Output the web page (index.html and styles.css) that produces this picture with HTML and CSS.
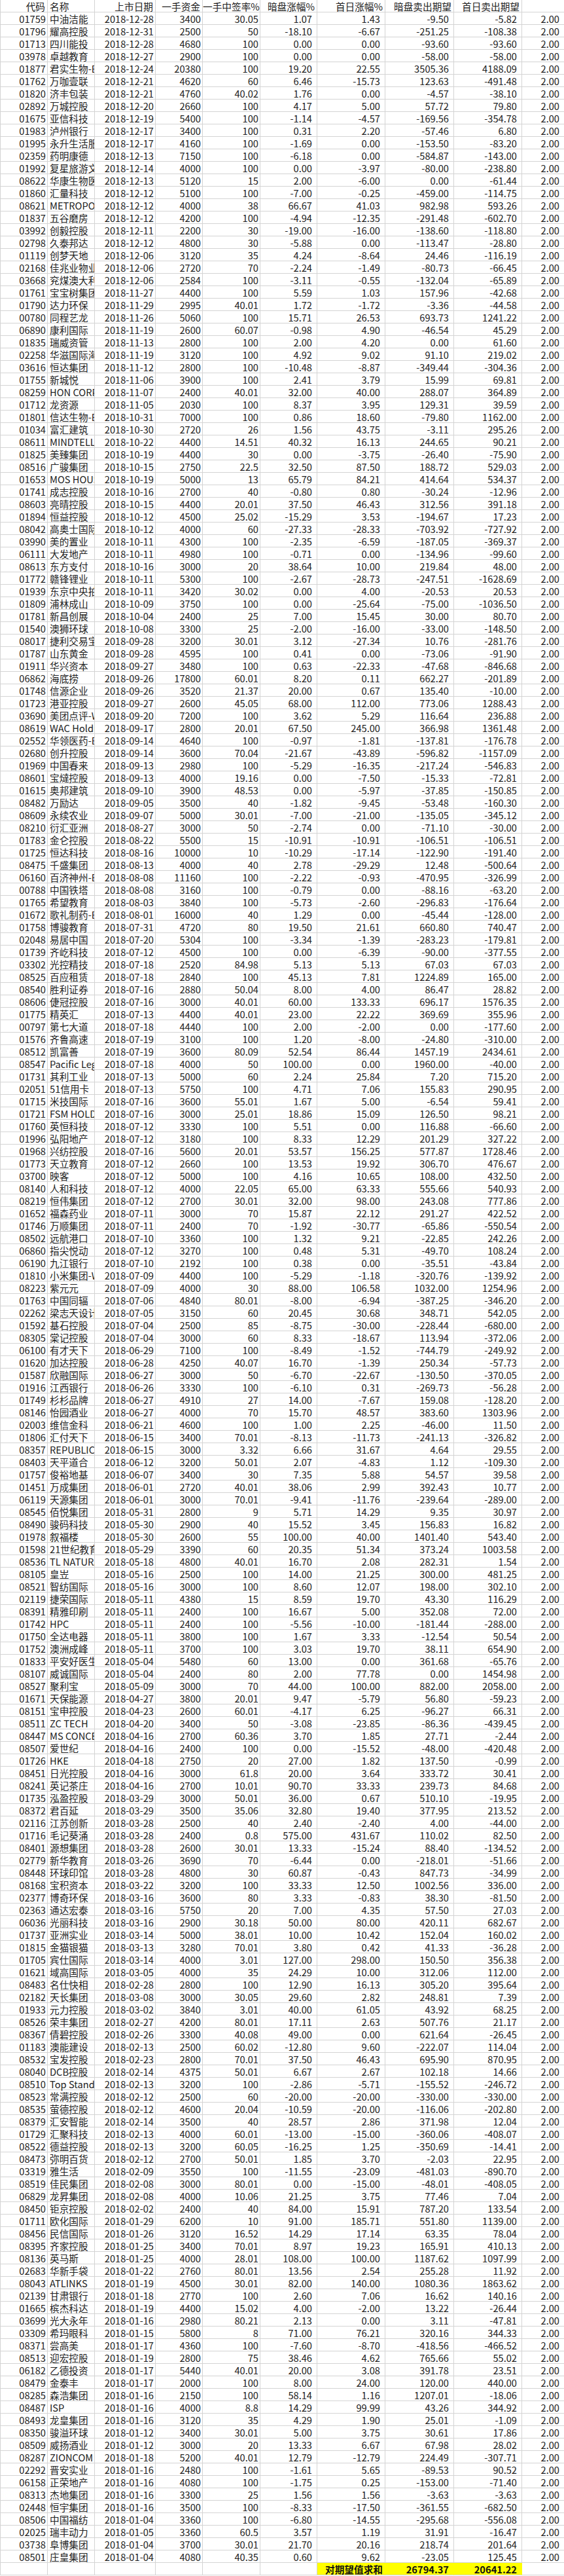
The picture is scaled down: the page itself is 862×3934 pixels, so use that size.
FILE: index.html
```html
<!DOCTYPE html>
<html lang="zh-CN">
<head>
<meta charset="utf-8">
<title>港股新股打新期望</title>
<link rel="stylesheet" href="styles.css">
</head>
<body>
<table class="sheet">
<thead>
<tr class="head"><th>代码<th class="name">名称<th>上市日期<th>一手资金<th>一手中签率%<th>暗盘涨幅%<th>首日涨幅%<th>暗盘卖出期望<th>首日卖出期望<th></tr>
</thead>
<tbody>
<tr><td>01759<td>中油洁能<td>2018-12-28<td>3400<td>30.05<td>1.07<td>1.43<td>-9.50<td>-5.82<td>2.00
<tr><td>01796<td>耀高控股<td>2018-12-31<td>2500<td>50<td>-18.10<td>-6.67<td>-251.25<td>-108.38<td>2.00
<tr><td>01713<td>四川能投<td>2018-12-28<td>4680<td>100<td>0.00<td>0.00<td>-93.60<td>-93.60<td>2.00
<tr><td>03978<td>卓越教育<td>2018-12-27<td>2900<td>100<td>0.00<td>0.00<td>-58.00<td>-58.00<td>2.00
<tr><td>01877<td>君实生物-B<td>2018-12-24<td>20380<td>100<td>19.20<td>22.55<td>3505.36<td>4188.09<td>2.00
<tr><td>01762<td>万咖壹联<td>2018-12-21<td>4620<td>60<td>6.46<td>-15.73<td>123.63<td>-491.48<td>2.00
<tr><td>01820<td>济丰包装<td>2018-12-21<td>4760<td>40.02<td>1.76<td>0.00<td>-4.57<td>-38.10<td>2.00
<tr><td>02892<td>万城控股<td>2018-12-20<td>2660<td>100<td>4.17<td>5.00<td>57.72<td>79.80<td>2.00
<tr><td>01675<td>亚信科技<td>2018-12-19<td>5400<td>100<td>-1.14<td>-4.57<td>-169.56<td>-354.78<td>2.00
<tr><td>01983<td>泸州银行<td>2018-12-17<td>3400<td>100<td>0.31<td>2.20<td>-57.46<td>6.80<td>2.00
<tr><td>01995<td>永升生活服务<td>2018-12-17<td>4160<td>100<td>-1.69<td>0.00<td>-153.50<td>-83.20<td>2.00
<tr><td>02359<td>药明康德<td>2018-12-13<td>7150<td>100<td>-6.18<td>0.00<td>-584.87<td>-143.00<td>2.00
<tr><td>01992<td>复星旅游文化<td>2018-12-14<td>4000<td>100<td>0.00<td>-3.97<td>-80.00<td>-238.80<td>2.00
<tr><td>08622<td>华康生物医学<td>2018-12-13<td>5120<td>15<td>2.00<td>-6.00<td>0.00<td>-61.44<td>2.00
<tr><td>01860<td>汇量科技<td>2018-12-12<td>5100<td>100<td>-7.00<td>-0.25<td>-459.00<td>-114.75<td>2.00
<tr><td>08621<td>METROPOLIS<td>2018-12-12<td>4000<td>38<td>66.67<td>41.03<td>982.98<td>593.26<td>2.00
<tr><td>01837<td>五谷磨房<td>2018-12-12<td>4200<td>100<td>-4.94<td>-12.35<td>-291.48<td>-602.70<td>2.00
<tr><td>03992<td>创毅控股<td>2018-12-11<td>2200<td>30<td>-19.00<td>-16.00<td>-138.60<td>-118.80<td>2.00
<tr><td>02798<td>久泰邦达<td>2018-12-12<td>4800<td>30<td>-5.88<td>0.00<td>-113.47<td>-28.80<td>2.00
<tr><td>01119<td>创梦天地<td>2018-12-06<td>3120<td>35<td>4.24<td>-8.64<td>24.46<td>-116.19<td>2.00
<tr><td>02168<td>佳兆业物业<td>2018-12-06<td>2720<td>70<td>-2.24<td>-1.49<td>-80.73<td>-66.45<td>2.00
<tr><td>03668<td>兖煤澳大利亚<td>2018-12-06<td>2584<td>100<td>-3.11<td>-0.55<td>-132.04<td>-65.89<td>2.00
<tr><td>01761<td>宝宝树集团<td>2018-11-27<td>4400<td>100<td>5.59<td>1.03<td>157.96<td>-42.68<td>2.00
<tr><td>01790<td>达力环保<td>2018-11-29<td>2995<td>40.01<td>1.72<td>-1.72<td>-3.36<td>-44.58<td>2.00
<tr><td>00780<td>同程艺龙<td>2018-11-26<td>5060<td>100<td>15.71<td>26.53<td>693.73<td>1241.22<td>2.00
<tr><td>06890<td>康利国际<td>2018-11-19<td>2600<td>60.07<td>-0.98<td>4.90<td>-46.54<td>45.29<td>2.00
<tr><td>01835<td>瑞威资管<td>2018-11-13<td>2800<td>100<td>2.00<td>4.20<td>0.00<td>61.60<td>2.00
<tr><td>02258<td>华滋国际海洋<td>2018-11-19<td>3120<td>100<td>4.92<td>9.02<td>91.10<td>219.02<td>2.00
<tr><td>03616<td>恒达集团<td>2018-11-12<td>2800<td>100<td>-10.48<td>-8.87<td>-349.44<td>-304.36<td>2.00
<tr><td>01755<td>新城悦<td>2018-11-06<td>3900<td>100<td>2.41<td>3.79<td>15.99<td>69.81<td>2.00
<tr><td>08259<td>HON CORP<td>2018-11-07<td>2400<td>40.01<td>32.00<td>40.00<td>288.07<td>364.89<td>2.00
<tr><td>01712<td>龙资源<td>2018-11-05<td>2030<td>100<td>8.37<td>3.95<td>129.31<td>39.59<td>2.00
<tr><td>01801<td>信达生物-B<td>2018-10-31<td>7000<td>100<td>0.86<td>18.60<td>-79.80<td>1162.00<td>2.00
<tr><td>01034<td>富汇建筑<td>2018-10-30<td>2720<td>26<td>1.56<td>43.75<td>-3.11<td>295.26<td>2.00
<tr><td>08611<td>MINDTELL<td>2018-10-22<td>4400<td>14.51<td>40.32<td>16.13<td>244.65<td>90.21<td>2.00
<tr><td>01825<td>美臻集团<td>2018-10-19<td>4400<td>30<td>0.00<td>-3.75<td>-26.40<td>-75.90<td>2.00
<tr><td>08516<td>广骏集团<td>2018-10-15<td>2750<td>22.5<td>32.50<td>87.50<td>188.72<td>529.03<td>2.00
<tr><td>01653<td>MOS HOUSE<td>2018-10-19<td>5000<td>13<td>65.79<td>84.21<td>414.64<td>534.37<td>2.00
<tr><td>01741<td>成志控股<td>2018-10-16<td>2700<td>40<td>-0.80<td>0.80<td>-30.24<td>-12.96<td>2.00
<tr><td>08603<td>亮晴控股<td>2018-10-15<td>4400<td>20.01<td>37.50<td>46.43<td>312.56<td>391.18<td>2.00
<tr><td>01894<td>恒益控股<td>2018-10-12<td>4500<td>25.02<td>-15.29<td>3.53<td>-194.67<td>17.23<td>2.00
<tr><td>08042<td>高奥士国际<td>2018-10-12<td>4000<td>60<td>-27.33<td>-28.33<td>-703.92<td>-727.92<td>2.00
<tr><td>03990<td>美的置业<td>2018-10-11<td>4300<td>100<td>-2.35<td>-6.59<td>-187.05<td>-369.37<td>2.00
<tr><td>06111<td>大发地产<td>2018-10-11<td>4980<td>100<td>-0.71<td>0.00<td>-134.96<td>-99.60<td>2.00
<tr><td>08613<td>东方支付<td>2018-10-16<td>3000<td>20<td>38.64<td>10.00<td>219.84<td>48.00<td>2.00
<tr><td>01772<td>赣锋锂业<td>2018-10-11<td>5300<td>100<td>-2.67<td>-28.73<td>-247.51<td>-1628.69<td>2.00
<tr><td>01939<td>东京中央拍卖<td>2018-10-11<td>3420<td>30.02<td>0.00<td>4.00<td>-20.53<td>20.53<td>2.00
<tr><td>01809<td>浦林成山<td>2018-10-09<td>3750<td>100<td>0.00<td>-25.64<td>-75.00<td>-1036.50<td>2.00
<tr><td>01781<td>新昌创展<td>2018-10-04<td>2400<td>25<td>7.00<td>15.45<td>30.00<td>80.70<td>2.00
<tr><td>01540<td>澳狮环球<td>2018-10-08<td>3300<td>25<td>-2.00<td>-16.00<td>-33.00<td>-148.50<td>2.00
<tr><td>08017<td>捷利交易宝<td>2018-09-28<td>3200<td>30.01<td>3.12<td>-27.34<td>10.76<td>-281.76<td>2.00
<tr><td>01787<td>山东黄金<td>2018-09-28<td>4595<td>100<td>0.41<td>0.00<td>-73.06<td>-91.90<td>2.00
<tr><td>01911<td>华兴资本<td>2018-09-27<td>3480<td>100<td>0.63<td>-22.33<td>-47.68<td>-846.68<td>2.00
<tr><td>06862<td>海底捞<td>2018-09-26<td>17800<td>60.01<td>8.20<td>0.11<td>662.27<td>-201.89<td>2.00
<tr><td>01748<td>信源企业<td>2018-09-26<td>3520<td>21.37<td>20.00<td>0.67<td>135.40<td>-10.00<td>2.00
<tr><td>01723<td>港亚控股<td>2018-09-27<td>2600<td>45.05<td>68.00<td>112.00<td>773.06<td>1288.43<td>2.00
<tr><td>03690<td>美团点评-W<td>2018-09-20<td>7200<td>100<td>3.62<td>5.29<td>116.64<td>236.88<td>2.00
<tr><td>08619<td>WAC Holdings<td>2018-09-17<td>2800<td>20.01<td>67.50<td>245.00<td>366.98<td>1361.48<td>2.00
<tr><td>02552<td>华领医药-B<td>2018-09-14<td>4640<td>100<td>-0.97<td>-1.81<td>-137.81<td>-176.78<td>2.00
<tr><td>02680<td>创升控股<td>2018-09-14<td>3600<td>70.04<td>-21.67<td>-43.89<td>-596.82<td>-1157.09<td>2.00
<tr><td>01969<td>中国春来<td>2018-09-13<td>2980<td>100<td>-5.29<td>-16.35<td>-217.24<td>-546.83<td>2.00
<tr><td>08601<td>宝燵控股<td>2018-09-13<td>4000<td>19.16<td>0.00<td>-7.50<td>-15.33<td>-72.81<td>2.00
<tr><td>01615<td>奥邦建筑<td>2018-09-10<td>3900<td>48.53<td>0.00<td>-5.97<td>-37.85<td>-150.85<td>2.00
<tr><td>08482<td>万励达<td>2018-09-05<td>3500<td>40<td>-1.82<td>-9.45<td>-53.48<td>-160.30<td>2.00
<tr><td>08609<td>永续农业<td>2018-09-07<td>5000<td>30.01<td>-7.00<td>-21.00<td>-135.05<td>-345.12<td>2.00
<tr><td>08210<td>衍汇亚洲<td>2018-08-27<td>3000<td>50<td>-2.74<td>0.00<td>-71.10<td>-30.00<td>2.00
<tr><td>01783<td>金仑控股<td>2018-08-22<td>5500<td>15<td>-10.91<td>-10.91<td>-106.51<td>-106.51<td>2.00
<tr><td>01725<td>恒达科技<td>2018-08-16<td>10000<td>10<td>-10.29<td>-17.14<td>-122.90<td>-191.40<td>2.00
<tr><td>08475<td>千盛集团<td>2018-08-13<td>4000<td>40<td>2.78<td>-29.29<td>12.48<td>-500.64<td>2.00
<tr><td>06160<td>百济神州-B<td>2018-08-08<td>11160<td>100<td>-2.22<td>-0.93<td>-470.95<td>-326.99<td>2.00
<tr><td>00788<td>中国铁塔<td>2018-08-08<td>3160<td>100<td>-0.79<td>0.00<td>-88.16<td>-63.20<td>2.00
<tr><td>01765<td>希望教育<td>2018-08-03<td>3840<td>100<td>-5.73<td>-2.60<td>-296.83<td>-176.64<td>2.00
<tr><td>01672<td>歌礼制药-B<td>2018-08-01<td>16000<td>40<td>1.29<td>0.00<td>-45.44<td>-128.00<td>2.00
<tr><td>01758<td>博骏教育<td>2018-07-31<td>4720<td>80<td>19.50<td>21.61<td>660.80<td>740.47<td>2.00
<tr><td>02048<td>易居中国<td>2018-07-20<td>5304<td>100<td>-3.34<td>-1.39<td>-283.23<td>-179.81<td>2.00
<tr><td>01739<td>齐屹科技<td>2018-07-12<td>4500<td>100<td>0.00<td>-6.39<td>-90.00<td>-377.55<td>2.00
<tr><td>03302<td>光控精技<td>2018-07-18<td>2520<td>84.98<td>5.13<td>5.13<td>67.03<td>67.03<td>2.00
<tr><td>08525<td>百应租赁<td>2018-07-18<td>2840<td>100<td>45.13<td>7.81<td>1224.89<td>165.00<td>2.00
<tr><td>08540<td>胜利证券<td>2018-07-16<td>2880<td>50.04<td>8.00<td>4.00<td>86.47<td>28.82<td>2.00
<tr><td>08606<td>倢冠控股<td>2018-07-16<td>3000<td>40.01<td>60.00<td>133.33<td>696.17<td>1576.35<td>2.00
<tr><td>01775<td>精英汇<td>2018-07-13<td>4400<td>40.01<td>23.00<td>22.22<td>369.69<td>355.96<td>2.00
<tr><td>00797<td>第七大道<td>2018-07-18<td>4440<td>100<td>2.00<td>-2.00<td>0.00<td>-177.60<td>2.00
<tr><td>01576<td>齐鲁高速<td>2018-07-19<td>3100<td>100<td>1.20<td>-8.00<td>-24.80<td>-310.00<td>2.00
<tr><td>08512<td>凯富善<td>2018-07-19<td>3600<td>80.09<td>52.54<td>86.44<td>1457.19<td>2434.61<td>2.00
<tr><td>08547<td>Pacific Legend<td>2018-07-18<td>4000<td>50<td>100.00<td>0.00<td>1960.00<td>-40.00<td>2.00
<tr><td>01731<td>其利工业<td>2018-07-13<td>5000<td>60<td>2.24<td>25.84<td>7.20<td>715.20<td>2.00
<tr><td>02051<td>51信用卡<td>2018-07-13<td>5750<td>100<td>4.71<td>7.06<td>155.83<td>290.95<td>2.00
<tr><td>01715<td>米技国际<td>2018-07-16<td>3600<td>55.01<td>1.67<td>5.00<td>-6.54<td>59.41<td>2.00
<tr><td>01721<td>FSM HOLDINGS<td>2018-07-16<td>3000<td>25.01<td>18.86<td>15.09<td>126.50<td>98.21<td>2.00
<tr><td>01760<td>英恒科技<td>2018-07-12<td>3330<td>100<td>5.51<td>0.00<td>116.88<td>-66.60<td>2.00
<tr><td>01996<td>弘阳地产<td>2018-07-12<td>3180<td>100<td>8.33<td>12.29<td>201.29<td>327.22<td>2.00
<tr><td>01968<td>兴纺控股<td>2018-07-16<td>5600<td>20.01<td>53.57<td>156.25<td>577.87<td>1728.46<td>2.00
<tr><td>01773<td>天立教育<td>2018-07-12<td>2660<td>100<td>13.53<td>19.92<td>306.70<td>476.67<td>2.00
<tr><td>03700<td>映客<td>2018-07-12<td>5000<td>100<td>4.16<td>10.65<td>108.00<td>432.50<td>2.00
<tr><td>08140<td>人和科技<td>2018-07-12<td>4000<td>22.05<td>65.00<td>63.33<td>555.66<td>540.93<td>2.00
<tr><td>08219<td>恒伟集团<td>2018-07-12<td>2700<td>30.01<td>32.00<td>98.00<td>243.08<td>777.86<td>2.00
<tr><td>01652<td>福森药业<td>2018-07-11<td>3000<td>70<td>15.87<td>22.12<td>291.27<td>422.52<td>2.00
<tr><td>01746<td>万顺集团<td>2018-07-11<td>2400<td>70<td>-1.92<td>-30.77<td>-65.86<td>-550.54<td>2.00
<tr><td>08502<td>远航港口<td>2018-07-10<td>3360<td>100<td>1.32<td>9.21<td>-22.85<td>242.26<td>2.00
<tr><td>06860<td>指尖悦动<td>2018-07-12<td>3270<td>100<td>0.48<td>5.31<td>-49.70<td>108.24<td>2.00
<tr><td>06190<td>九江银行<td>2018-07-10<td>2192<td>100<td>0.38<td>0.00<td>-35.51<td>-43.84<td>2.00
<tr><td>01810<td>小米集团-W<td>2018-07-09<td>4400<td>100<td>-5.29<td>-1.18<td>-320.76<td>-139.92<td>2.00
<tr><td>08223<td>紫元元<td>2018-07-09<td>4000<td>30<td>88.00<td>106.58<td>1032.00<td>1254.96<td>2.00
<tr><td>01763<td>中国同辐<td>2018-07-06<td>4840<td>80.01<td>-8.00<td>-6.94<td>-387.25<td>-346.20<td>2.00
<tr><td>02262<td>梁志天设计<td>2018-07-05<td>3150<td>60<td>20.45<td>30.68<td>348.71<td>542.05<td>2.00
<tr><td>01592<td>基石控股<td>2018-07-04<td>2500<td>85<td>-8.75<td>-30.00<td>-228.44<td>-680.00<td>2.00
<tr><td>08305<td>棠记控股<td>2018-07-04<td>3000<td>60<td>8.33<td>-18.67<td>113.94<td>-372.06<td>2.00
<tr><td>06100<td>有才天下<td>2018-06-29<td>7100<td>100<td>-8.49<td>-1.52<td>-744.79<td>-249.92<td>2.00
<tr><td>01620<td>加达控股<td>2018-06-28<td>4250<td>40.07<td>16.70<td>-1.39<td>250.34<td>-57.73<td>2.00
<tr><td>01587<td>欣融国际<td>2018-06-27<td>3000<td>50<td>-6.70<td>-22.67<td>-130.50<td>-370.05<td>2.00
<tr><td>01916<td>江西银行<td>2018-06-26<td>3330<td>100<td>-6.10<td>0.31<td>-269.73<td>-56.28<td>2.00
<tr><td>01749<td>杉杉品牌<td>2018-06-27<td>4910<td>27<td>14.00<td>-7.67<td>159.08<td>-128.20<td>2.00
<tr><td>08146<td>怡园酒业<td>2018-06-27<td>4000<td>70<td>15.70<td>48.57<td>383.60<td>1303.96<td>2.00
<tr><td>02003<td>维信金科<td>2018-06-21<td>4600<td>100<td>1.00<td>2.25<td>-46.00<td>11.50<td>2.00
<tr><td>01806<td>汇付天下<td>2018-06-15<td>3400<td>70.01<td>-8.13<td>-11.73<td>-241.13<td>-326.82<td>2.00
<tr><td>08357<td>REPUBLIC HEALTHCARE<td>2018-06-15<td>3000<td>3.32<td>6.66<td>31.67<td>4.64<td>29.55<td>2.00
<tr><td>08403<td>天平道合<td>2018-06-12<td>3200<td>50.01<td>2.07<td>-4.83<td>1.12<td>-109.30<td>2.00
<tr><td>01757<td>俊裕地基<td>2018-06-07<td>3400<td>30<td>7.35<td>5.88<td>54.57<td>39.58<td>2.00
<tr><td>01451<td>万成集团<td>2018-06-01<td>2720<td>40.01<td>38.06<td>2.99<td>392.43<td>10.77<td>2.00
<tr><td>06119<td>天源集团<td>2018-06-01<td>3000<td>70.01<td>-9.41<td>-11.76<td>-239.64<td>-289.00<td>2.00
<tr><td>08545<td>佰悦集团<td>2018-05-31<td>2800<td>9<td>5.71<td>14.29<td>9.35<td>30.97<td>2.00
<tr><td>08490<td>骏码科技<td>2018-05-30<td>2900<td>40<td>15.52<td>3.45<td>156.83<td>16.82<td>2.00
<tr><td>01978<td>叙福楼<td>2018-05-30<td>2600<td>55<td>100.00<td>40.00<td>1401.40<td>543.40<td>2.00
<tr><td>01598<td>21世纪教育<td>2018-05-29<td>3390<td>60<td>20.35<td>51.34<td>373.24<td>1003.58<td>2.00
<tr><td>08536<td>TL NATURAL<td>2018-05-18<td>4800<td>40.01<td>16.70<td>2.08<td>282.31<td>1.54<td>2.00
<tr><td>08105<td>皇岦<td>2018-05-16<td>2500<td>100<td>14.00<td>21.25<td>300.00<td>481.25<td>2.00
<tr><td>08521<td>智纺国际<td>2018-05-16<td>3000<td>100<td>8.60<td>12.07<td>198.00<td>302.10<td>2.00
<tr><td>02119<td>捷荣国际<td>2018-05-11<td>4380<td>15<td>8.59<td>19.70<td>43.30<td>116.29<td>2.00
<tr><td>08391<td>精雅印刷<td>2018-05-11<td>2400<td>100<td>16.67<td>5.00<td>352.08<td>72.00<td>2.00
<tr><td>01742<td>HPC<td>2018-05-11<td>2400<td>100<td>-5.56<td>-10.00<td>-181.44<td>-288.00<td>2.00
<tr><td>01750<td>全达电器<td>2018-05-11<td>3800<td>100<td>1.67<td>3.33<td>-12.54<td>50.54<td>2.00
<tr><td>01752<td>澳洲成峰<td>2018-05-11<td>3700<td>100<td>3.03<td>19.70<td>38.11<td>654.90<td>2.00
<tr><td>01833<td>平安好医生<td>2018-05-04<td>5480<td>60<td>13.00<td>0.00<td>361.68<td>-65.76<td>2.00
<tr><td>08107<td>威诚国际<td>2018-05-04<td>2400<td>80<td>2.00<td>77.78<td>0.00<td>1454.98<td>2.00
<tr><td>08527<td>聚利宝<td>2018-05-09<td>3000<td>70<td>44.00<td>100.00<td>882.00<td>2058.00<td>2.00
<tr><td>01671<td>天保能源<td>2018-04-27<td>3800<td>20.01<td>9.47<td>-5.79<td>56.80<td>-59.23<td>2.00
<tr><td>08151<td>宝申控股<td>2018-04-23<td>2600<td>60.01<td>-4.17<td>6.25<td>-96.27<td>66.31<td>2.00
<tr><td>08511<td>ZC TECH<td>2018-04-20<td>3400<td>50<td>-3.08<td>-23.85<td>-86.36<td>-439.45<td>2.00
<tr><td>08447<td>MS CONCEPT<td>2018-04-16<td>2700<td>60.36<td>3.70<td>1.85<td>27.71<td>-2.44<td>2.00
<tr><td>08507<td>爱世纪<td>2018-04-16<td>2400<td>100<td>0.00<td>-15.52<td>-48.00<td>-420.48<td>2.00
<tr><td>01726<td>HKE<td>2018-04-18<td>2750<td>20<td>27.00<td>1.82<td>137.50<td>-0.99<td>2.00
<tr><td>08451<td>日光控股<td>2018-04-16<td>3000<td>61.8<td>20.00<td>3.64<td>333.72<td>30.41<td>2.00
<tr><td>08241<td>英记茶庄<td>2018-04-16<td>2700<td>10.01<td>90.70<td>33.33<td>239.73<td>84.68<td>2.00
<tr><td>01735<td>泓盈控股<td>2018-03-29<td>3000<td>50.01<td>36.00<td>0.67<td>510.10<td>-19.95<td>2.00
<tr><td>08372<td>君百延<td>2018-03-29<td>3500<td>35.06<td>32.80<td>19.40<td>377.95<td>213.52<td>2.00
<tr><td>02116<td>江苏创新<td>2018-03-28<td>2500<td>40<td>2.40<td>-2.40<td>4.00<td>-44.00<td>2.00
<tr><td>01716<td>毛记葵涌<td>2018-03-28<td>2400<td>0.8<td>575.00<td>431.67<td>110.02<td>82.50<td>2.00
<tr><td>08401<td>源想集团<td>2018-03-28<td>2600<td>30.01<td>13.33<td>-15.24<td>88.40<td>-134.52<td>2.00
<tr><td>02779<td>新华教育<td>2018-03-26<td>3690<td>70<td>-6.44<td>0.00<td>-218.01<td>-51.66<td>2.00
<tr><td>08448<td>环球印馆<td>2018-03-28<td>4800<td>30<td>60.87<td>-0.43<td>847.73<td>-34.99<td>2.00
<tr><td>08168<td>宝积资本<td>2018-03-22<td>3200<td>100<td>33.33<td>12.50<td>1002.56<td>336.00<td>2.00
<tr><td>02377<td>博奇环保<td>2018-03-16<td>3600<td>80<td>3.33<td>-0.83<td>38.30<td>-81.50<td>2.00
<tr><td>02363<td>通达宏泰<td>2018-03-16<td>5750<td>20<td>7.00<td>4.35<td>57.50<td>27.03<td>2.00
<tr><td>06036<td>光丽科技<td>2018-03-16<td>2900<td>30.18<td>50.00<td>80.00<td>420.11<td>682.67<td>2.00
<tr><td>01737<td>亚洲实业<td>2018-03-14<td>5000<td>38.01<td>10.00<td>10.42<td>152.04<td>160.02<td>2.00
<tr><td>01815<td>金猫银猫<td>2018-03-13<td>3280<td>70.01<td>3.80<td>0.42<td>41.33<td>-36.28<td>2.00
<tr><td>01705<td>宾仕国际<td>2018-03-14<td>4000<td>3.01<td>127.00<td>298.00<td>150.50<td>356.38<td>2.00
<tr><td>01621<td>域高国际<td>2018-03-05<td>4000<td>35<td>24.29<td>10.00<td>312.06<td>112.00<td>2.00
<tr><td>08483<td>名仕快相<td>2018-02-28<td>2800<td>100<td>12.90<td>16.13<td>305.20<td>395.64<td>2.00
<tr><td>02182<td>天长集团<td>2018-03-08<td>3000<td>30.05<td>29.60<td>2.82<td>248.81<td>7.39<td>2.00
<tr><td>01933<td>元力控股<td>2018-03-02<td>3840<td>3.01<td>40.00<td>61.05<td>43.92<td>68.25<td>2.00
<tr><td>08526<td>荣丰集团<td>2018-02-27<td>4200<td>80.01<td>17.11<td>2.63<td>507.76<td>21.17<td>2.00
<tr><td>08367<td>倩碧控股<td>2018-02-26<td>3300<td>40.08<td>49.00<td>0.00<td>621.64<td>-26.45<td>2.00
<tr><td>01183<td>澳能建设<td>2018-02-13<td>2500<td>60.02<td>-12.80<td>9.60<td>-222.07<td>114.04<td>2.00
<tr><td>08532<td>宝发控股<td>2018-02-23<td>2800<td>70.01<td>37.50<td>46.43<td>695.90<td>870.95<td>2.00
<tr><td>08040<td>DCB控股<td>2018-02-14<td>4375<td>50.01<td>6.67<td>2.67<td>102.18<td>14.66<td>2.00
<tr><td>08510<td>Top Standard<td>2018-02-13<td>3200<td>100<td>-2.86<td>-5.71<td>-155.52<td>-246.72<td>2.00
<tr><td>08523<td>常满控股<td>2018-02-12<td>2500<td>60<td>-20.00<td>-20.00<td>-330.00<td>-330.00<td>2.00
<tr><td>08535<td>萤德控股<td>2018-02-12<td>4600<td>20.04<td>-10.59<td>-20.00<td>-116.06<td>-202.80<td>2.00
<tr><td>08379<td>汇安智能<td>2018-02-14<td>3500<td>40<td>28.57<td>2.86<td>371.98<td>12.04<td>2.00
<tr><td>01729<td>汇聚科技<td>2018-02-13<td>4000<td>60.01<td>-13.00<td>-15.00<td>-360.06<td>-408.07<td>2.00
<tr><td>08522<td>德益控股<td>2018-02-13<td>3200<td>60.05<td>-16.25<td>1.25<td>-350.69<td>-14.41<td>2.00
<tr><td>08473<td>弥明百货<td>2018-02-12<td>2700<td>50.01<td>1.85<td>3.70<td>-2.03<td>22.95<td>2.00
<tr><td>03319<td>雅生活<td>2018-02-09<td>3550<td>100<td>-11.55<td>-23.09<td>-481.03<td>-890.70<td>2.00
<tr><td>08519<td>佳民集团<td>2018-02-08<td>3000<td>80.01<td>0.00<td>-15.00<td>-48.01<td>-408.05<td>2.00
<tr><td>06829<td>龙昇集团<td>2018-02-08<td>4000<td>10.06<td>21.25<td>3.75<td>77.46<td>7.04<td>2.00
<tr><td>08450<td>钜京控股<td>2018-02-02<td>2400<td>40<td>84.00<td>15.91<td>787.20<td>133.54<td>2.00
<tr><td>01711<td>欧化国际<td>2018-01-29<td>6200<td>10<td>91.00<td>185.71<td>551.80<td>1139.00<td>2.00
<tr><td>08456<td>民信国际<td>2018-01-26<td>3120<td>16.52<td>14.29<td>17.14<td>63.35<td>78.04<td>2.00
<tr><td>08395<td>齐家控股<td>2018-01-25<td>3400<td>70.01<td>8.97<td>19.23<td>165.91<td>410.13<td>2.00
<tr><td>08136<td>英马斯<td>2018-01-25<td>4000<td>28.01<td>108.00<td>100.00<td>1187.62<td>1097.99<td>2.00
<tr><td>02683<td>华新手袋<td>2018-01-22<td>2760<td>80.01<td>13.56<td>2.54<td>255.28<td>11.92<td>2.00
<tr><td>08043<td>ATLINKS<td>2018-01-19<td>4500<td>30.01<td>82.00<td>140.00<td>1080.36<td>1863.62<td>2.00
<tr><td>02139<td>甘肃银行<td>2018-01-18<td>2770<td>100<td>2.60<td>7.06<td>16.62<td>140.16<td>2.00
<tr><td>01665<td>槟杰科达<td>2018-01-19<td>4400<td>15.02<td>4.00<td>-2.00<td>13.22<td>-26.44<td>2.00
<tr><td>03699<td>光大永年<td>2018-01-16<td>2980<td>80.21<td>2.13<td>0.00<td>3.11<td>-47.81<td>2.00
<tr><td>03309<td>希玛眼科<td>2018-01-15<td>5800<td>8<td>71.00<td>76.21<td>320.16<td>344.33<td>2.00
<tr><td>08371<td>尝高美<td>2018-01-17<td>4360<td>100<td>-7.60<td>-8.70<td>-418.56<td>-466.52<td>2.00
<tr><td>08513<td>迎宏控股<td>2018-01-19<td>2800<td>75<td>38.46<td>4.62<td>765.66<td>55.02<td>2.00
<tr><td>06182<td>乙德投资<td>2018-01-17<td>5440<td>40.01<td>20.00<td>3.08<td>391.78<td>23.51<td>2.00
<tr><td>08479<td>金泰丰<td>2018-01-17<td>2000<td>100<td>8.00<td>24.00<td>120.00<td>440.00<td>2.00
<tr><td>08285<td>森浩集团<td>2018-01-16<td>2150<td>100<td>58.14<td>1.16<td>1207.01<td>-18.06<td>2.00
<tr><td>08487<td>ISP<td>2018-01-16<td>4000<td>8.8<td>14.29<td>99.99<td>43.26<td>344.92<td>2.00
<tr><td>08493<td>龙皇集团<td>2018-01-16<td>3120<td>35<td>4.29<td>1.90<td>25.01<td>-1.09<td>2.00
<tr><td>08350<td>骏溢环球<td>2018-01-12<td>3400<td>30.01<td>5.00<td>3.75<td>30.61<td>17.86<td>2.00
<tr><td>08509<td>威扬酒业<td>2018-01-12<td>3000<td>20<td>13.33<td>6.67<td>67.98<td>28.02<td>2.00
<tr><td>08287<td>ZIONCOM<td>2018-01-18<td>5200<td>40.01<td>12.79<td>-12.79<td>224.49<td>-307.71<td>2.00
<tr><td>02292<td>晋安实业<td>2018-01-16<td>2480<td>100<td>-1.61<td>5.65<td>-89.53<td>90.52<td>2.00
<tr><td>06158<td>正荣地产<td>2018-01-16<td>4080<td>100<td>-1.75<td>0.25<td>-153.00<td>-71.40<td>2.00
<tr><td>08313<td>杰地集团<td>2018-01-16<td>3300<td>25<td>1.56<td>1.56<td>-3.63<td>-3.63<td>2.00
<tr><td>02448<td>恒宇集团<td>2018-01-16<td>3500<td>100<td>-8.33<td>-17.50<td>-361.55<td>-682.50<td>2.00
<tr><td>08506<td>中国福纺<td>2018-01-04<td>3360<td>100<td>-6.80<td>-14.55<td>-295.68<td>-556.08<td>2.00
<tr><td>02025<td>瑞丰动力<td>2018-01-05<td>3360<td>60.5<td>3.57<td>1.19<td>31.91<td>-16.47<td>2.00
<tr><td>03738<td>阜博集团<td>2018-01-04<td>3700<td>30.01<td>21.70<td>20.16<td>218.74<td>201.64<td>2.00
<tr><td>08501<td>庄皇集团<td>2018-01-04<td>4080<td>40.35<td>0.60<td>9.62<td>-23.05<td>125.45<td>2.00
<tr class="sum"><td><td><td><td><td><td><td class="hl label">对期望值求和<td class="hl">26794.37<td class="hl">20641.22<td>
</tbody>
</table>
</body>
</html>
```

FILE: styles.css
```css
html, body {
  margin: 0;
  padding: 0;
  background: #ffffff;
}

body {
  overflow: hidden;
}

.sheet {
  display: block;
  border-collapse: separate;
  border-spacing: 0;
  border-left: 1px solid #d4d4d4;
  width: 861px;
  font-family: "Noto Sans CJK SC", "Liberation Sans", sans-serif;
  font-size: 14.67px;
  color: #222222;
}

.sheet thead,
.sheet tbody {
  display: block;
}

.sheet tr {
  display: grid;
  grid-template-columns: 72px 72px 93px 72px 88px 87px 104px 105px 104px 64px;
  height: 19px;
}

.sheet th,
.sheet td {
  display: block;
  box-sizing: border-box;
  height: 19px;
  margin: 0;
  padding: 2px 2px 0 0;
  border-right: 1px solid #d4d4d4;
  border-bottom: 1px solid #d4d4d4;
  line-height: 16px;
  font-weight: 400;
  text-align: right;
  white-space: nowrap;
}

.sheet th {
  padding-right: 3px;
}

.sheet td:nth-child(2),
.sheet th.name {
  text-align: left;
  padding-left: 3px;
  padding-right: 0;
  overflow-x: clip;
  overflow-y: visible;
}

.sheet td:nth-child(n+6) {
  padding-right: 7px;
}

.sheet td:last-child,
.sheet th:last-child {
  border-right: none;
}

.sheet .sum .hl {
  background: #ffff00;
  border-right-color: #ffff00;
  font-weight: 700;
  color: #111111;
}

.sheet .sum .label {
  padding-right: 3px;
}
```
